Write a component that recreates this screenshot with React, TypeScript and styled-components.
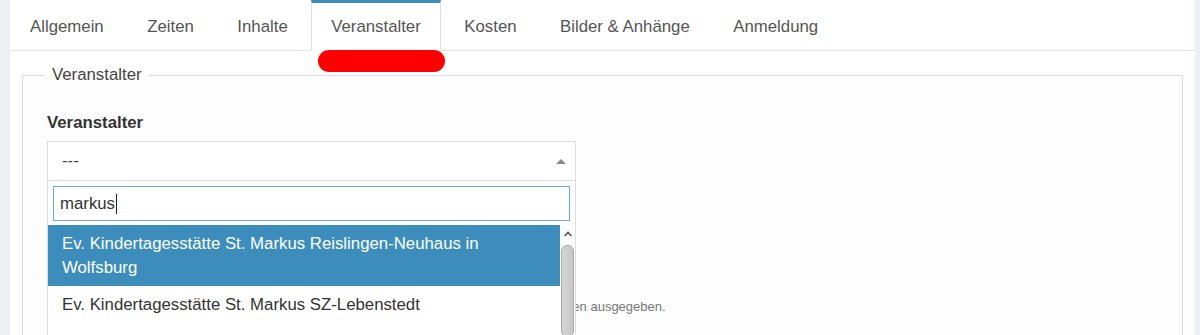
import React from "react";
import styled, { createGlobalStyle } from "styled-components";

const tabs = ["Allgemein", "Zeiten", "Inhalte", "Veranstalter", "Kosten", "Bilder & Anhänge", "Anmeldung"];

const results = [
  "Ev. Kindertagesstätte St. Markus Reislingen-Neuhaus in Wolfsburg",
  "Ev. Kindertagesstätte St. Markus SZ-Lebenstedt",
];

const App = () => {
  return (
    <Page>
      <GlobalStyle />
      <Panel>
        <TabBar>
          {tabs.map((t) => (
            <Tab key={t} $active={t === "Veranstalter"}>
              {t}
            </Tab>
          ))}
          <Marker />
        </TabBar>

        <Content>
          <Fieldset>
            <Legend>Veranstalter</Legend>
            <Label>Veranstalter</Label>
            <SelectWrap>
              <Select>
                <span>---</span>
                <Caret />
              </Select>
              <Dropdown>
                <Search>
                  markus<Cursor />
                </Search>
                <ResultsRow>
                  <List>
                    {results.map((r, i) => (
                      <Option key={r} $highlighted={i === 0}>
                        {r}
                      </Option>
                    ))}
                  </List>
                  <Track>
                    <svg width="10" height="6" viewBox="0 0 10 6">
                      <path d="M1.5 5 L5 1.5 L8.5 5" fill="none" stroke="#555" strokeWidth="1.6" />
                    </svg>
                    <Thumb />
                  </Track>
                </ResultsRow>
              </Dropdown>
            </SelectWrap>
            <Help>
              Der gewählte Veranstalter wird in der Detailansicht der Veranstaltung mit seinen Kontaktdaten ausgegeben.
            </Help>
          </Fieldset>
        </Content>
      </Panel>
    </Page>
  );
};

export default App;

const GlobalStyle = createGlobalStyle`
  html, body {
    margin: 0;
    padding: 0;
    overflow: hidden;
    background: #ecf0f5;
    font-family: "Liberation Sans", Arial, sans-serif;
  }
`;

const Page = styled.div`
  display: flex;
  height: 335px;
  padding: 0 5px 0 10px;
  background: #ecf0f5;
  overflow: hidden;
`;

const Panel = styled.div`
  flex: 1;
  background: #ffffff;
`;

const TabBar = styled.div`
  position: relative;
  display: flex;
  height: 50px;
  border-bottom: 1px solid #e3e3e3;
`;

const Tab = styled.div<{ $active?: boolean }>`
  display: flex;
  align-items: center;
  padding: 0 19px;
  margin-right: 3.5px;
  margin-bottom: -1px;
  font-size: 16.8px;
  color: #555;
  border: 1px solid transparent;
  border-top: 3px solid transparent;
  ${(p) =>
    p.$active &&
    `
    border-color: #ddd;
    border-top-color: #3c8dbc;
    border-bottom-color: #fff;
    background: #fff;
  `}
`;

const Marker = styled.div`
  position: absolute;
  left: 308px;
  top: 50px;
  width: 127px;
  height: 22px;
  border-radius: 11px;
  background: #ff0000;
`;

const Content = styled.div`
  padding: 15px 12px 0 12px;
`;

const Fieldset = styled.fieldset`
  margin: 0;
  padding: 0 24px;
  border: 1px solid #dcdcdc;
  background: #fdfdfd;
  min-height: 400px;
`;

const Legend = styled.legend`
  margin-left: -2px;
  padding: 0 7px;
  font-size: 16.8px;
  line-height: 18px;
  color: #444;
`;

const Label = styled.div`
  margin-top: 29px;
  font-size: 16.8px;
  line-height: 20px;
  font-weight: bold;
  color: #333;
`;

const SelectWrap = styled.div`
  position: relative;
  width: 529px;
  margin-top: 8px;
`;

const Select = styled.div`
  box-sizing: border-box;
  height: 40px;
  display: flex;
  align-items: center;
  justify-content: space-between;
  padding: 0 9px 0 14px;
  border: 1px solid #ddd;
  background: #fff;
  font-size: 16.8px;
  color: #444;
`;

const Caret = styled.span`
  width: 0;
  height: 0;
  border-left: 5px solid transparent;
  border-right: 5px solid transparent;
  border-bottom: 5px solid #888;
`;

const Dropdown = styled.div`
  position: absolute;
  left: 0;
  right: 0;
  top: 39px;
  box-sizing: border-box;
  border: 1px solid #ddd;
  background: #fff;
  padding: 5px 5px 0 5px;
  z-index: 2;
`;

const Search = styled.div`
  box-sizing: border-box;
  height: 35px;
  display: flex;
  align-items: center;
  padding: 0 6px;
  border: 1px solid #6aaad4;
  font-size: 16.8px;
  color: #333;
`;

const Cursor = styled.span`
  display: inline-block;
  width: 1px;
  height: 20px;
  margin-left: 1px;
  background: #222;
`;

const ResultsRow = styled.div`
  display: flex;
  margin: 4px -5px 0 -5px;
  height: 120px;
`;

const List = styled.div`
  flex: 1;
`;

const Option = styled.div<{ $highlighted?: boolean }>`
  padding: 7px 14px 6px 14px;
  font-size: 16.8px;
  line-height: 24px;
  color: ${(p) => (p.$highlighted ? "#fff" : "#333")};
  background: ${(p) => (p.$highlighted ? "#3c8dbc" : "#fff")};
`;

const Track = styled.div`
  width: 15px;
  display: flex;
  flex-direction: column;
  align-items: center;
  padding-top: 6px;
  gap: 8px;
  background: #fff;
`;

const Thumb = styled.div`
  width: 11px;
  height: 90px;
  border-radius: 6px;
  border: 1px solid #a9a9a9;
  background: linear-gradient(to right, #d6d6d6, #c6c6c6);
`;

const Help = styled.div`
  margin-top: 118px;
  font-size: 13px;
  line-height: 16px;
  color: #777;
  white-space: nowrap;
`;
